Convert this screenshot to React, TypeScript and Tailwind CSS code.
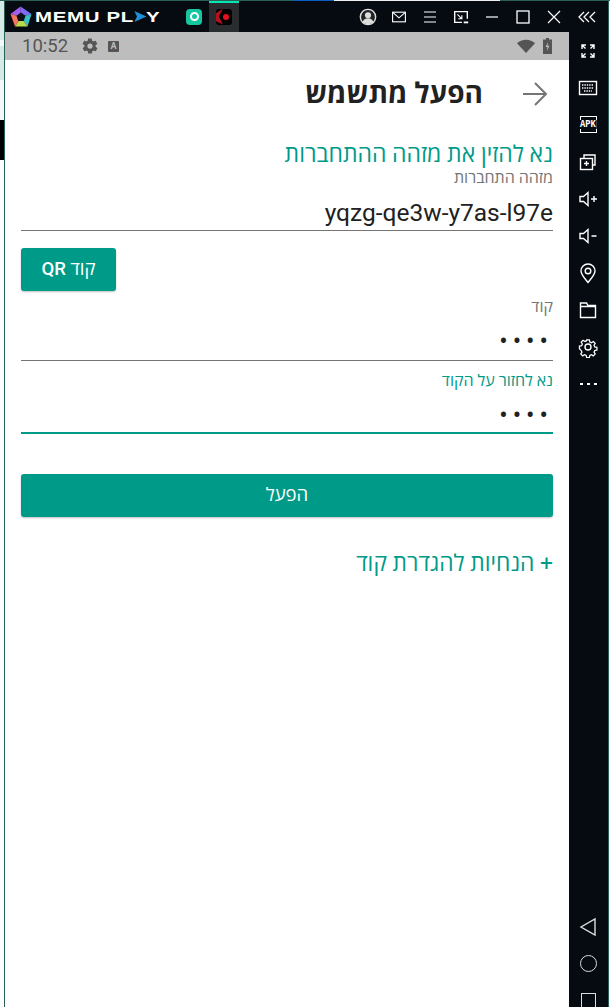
import React from 'react'

const stroke = { fill: 'none', stroke: 'white', strokeWidth: 1.4 }

const TopIcon = ({ children, size = 20 }: { children: React.ReactNode; size?: number }) => (
    <div className="w-[31px] flex items-center justify-center">
        <svg width={size} height={size} viewBox="0 0 20 20" {...stroke}>{children}</svg>
    </div>
)

const SideSlot = ({ children }: { children: React.ReactNode }) => (
    <div className="h-[37px] w-full shrink-0 flex items-center justify-center">{children}</div>
)

const SideIcon = ({ children }: { children: React.ReactNode }) => (
    <SideSlot>
        <svg width="22" height="22" viewBox="0 0 22 22" {...stroke}>{children}</svg>
    </SideSlot>
)

const Logo = () => (
    <svg width="22" height="22" viewBox="0 0 22 22" className="shrink-0">
        <polygon points="10.5,0.5 21.5,8 11,11" fill="#7b6cf6" />
        <polygon points="10.5,0.5 0.5,8 11,11" fill="#a35cf0" />
        <polygon points="21.5,8 17.5,20.5 11,11" fill="#35c3c9" />
        <polygon points="17.5,20.5 5,20.5 11,11" fill="#b9d94a" />
        <polygon points="5,20.5 0.5,8 11,11" fill="#f5745f" />
        <polygon points="11,6.5 15.5,9.8 13.8,15 8.2,15 6.5,9.8" fill="#0b0f16" />
    </svg>
)

const TitleBar = () => (
    <div className="h-[31px] flex items-center bg-[#060b12]">
        <div className="pl-[5px] flex items-center gap-[3px] w-[181px]">
            <Logo />
            <div className="flex items-center text-white font-black text-[15px] leading-none tracking-[0.5px] origin-left scale-x-[1.36]" style={{ fontFamily: '"Liberation Sans", sans-serif' }}>
                <span className="whitespace-pre">MEMU PL</span>
                <svg width="9" height="11" viewBox="0 0 9 11"><polygon points="0,0 9,5.5 0,11 2,5.5" fill="#1f8fd8" /></svg>
                <span>Y</span>
            </div>
        </div>
        <div className="w-[23px] flex items-center justify-start">
            <div className="size-[16px] rounded-[4px] bg-[#16c6a0] flex items-center justify-center">
                <div className="size-[9px] rounded-full border-[2px] border-white" />
            </div>
        </div>
        <div className="relative h-full w-[30px] bg-[#2a2d30] flex items-center justify-center">
            <div className="absolute inset-x-0 top-0 h-[2px] bg-[#00e6b4]" />
            <div className="size-[16px] rounded-[3px] bg-black flex items-center justify-center relative overflow-hidden">
                <div className="absolute left-0 top-0 w-[7px] h-full bg-[#b3121d] [clip-path:polygon(0_30%,100%_0,40%_50%,100%_100%,0_80%)]" />
                <div className="size-[6px] rounded-full bg-[#e8101e] ml-[4px]" />
            </div>
        </div>
        <div className="ml-auto flex items-center mr-[1px]">
            <TopIcon size={18}>
                <circle cx="10" cy="10" r="8.5" fill="#222" stroke="#ddd" strokeWidth="1.6" />
                <circle cx="10" cy="8" r="3.4" fill="#ddd" stroke="none" />
                <path d="M3.8 15.5c1.5-3 3.6-4 6.2-4s4.7 1 6.2 4c-3.5 3.2-8.9 3.2-12.4 0z" fill="#ddd" stroke="none" />
            </TopIcon>
            <TopIcon size={16}>
                <rect x="2" y="4" width="16" height="12" />
                <path d="M2.5 4.5 10 11l7.500-6.500" />
            </TopIcon>
            <TopIcon>
                <path d="M4 5h12M4 10h12M4 15h12" strokeWidth="1.1" />
            </TopIcon>
            <TopIcon size={18}>
                <path d="M11 16H3V4h14v8" strokeWidth="1.5" />
                <path d="M6 7l5 5M11 8v4H7" strokeWidth="1.2" />
                <path d="M13 16h5" strokeWidth="2" />
            </TopIcon>
            <TopIcon>
                <path d="M4 10h12" strokeWidth="1.2" />
            </TopIcon>
            <TopIcon>
                <rect x="4" y="4" width="12" height="12" strokeWidth="1.3" />
            </TopIcon>
            <TopIcon>
                <path d="M4 4l12 12M16 4L4 16" strokeWidth="1.2" />
            </TopIcon>
            <div className="w-[38px] flex items-center justify-end pr-[11px]">
                <svg width="18" height="14" viewBox="0 0 18 14" fill="none" stroke="white" strokeWidth="1.3">
                    <path d="M6 2 1 7l5 5M11 2 6 7l5 5M17 2l-5 5 5 5" />
                </svg>
            </div>
        </div>
    </div>
)

const StatusBar = () => (
    <div className="h-[28px] shrink-0 bg-[#bdbdbd] flex items-center pl-[17px] pr-[17px] text-[#555555]" style={{ fontFamily: 'Roboto, sans-serif' }}>
        <span className="text-[18.500px] leading-none">10:52</span>
        <svg width="18" height="18" viewBox="0 0 24 24" fill="#555555" className="ml-[13px]">
            <path d="M19.4 13c.1-.3.1-.7.1-1s0-.7-.1-1l2.1-1.6c.2-.2.2-.4.1-.6l-2-3.5c-.1-.2-.4-.3-.6-.2l-2.5 1c-.5-.4-1.1-.7-1.7-1l-.4-2.6c0-.3-.2-.5-.5-.5h-4c-.3 0-.5.2-.5.4l-.4 2.7c-.6.2-1.1.6-1.7 1l-2.5-1c-.2-.1-.5 0-.6.2l-2 3.5c-.1.2 0 .5.1.6L4.6 11c0 .3-.1.7-.1 1s0 .7.1 1l-2.1 1.6c-.2.2-.2.4-.1.6l2 3.5c.1.2.4.3.6.2l2.5-1c.5.4 1.1.7 1.7 1l.4 2.6c0 .3.2.5.5.5h4c.3 0 .5-.2.5-.4l.4-2.7c.6-.2 1.1-.6 1.7-1l2.5 1c.2.1.5 0 .6-.2l2-3.5c.1-.2.1-.5-.1-.6zM12 15.5a3.5 3.5 0 1 1 0-7 3.5 3.5 0 0 1 0 7z" />
        </svg>
        <div className="ml-[9px] size-[11px] bg-[#555555] rounded-[1px] text-[#bdbdbd] text-[9px] font-bold leading-[11px] text-center">A</div>
        <div className="ml-auto flex items-center gap-[8px]">
            <svg width="18" height="14" viewBox="0 0 18 14" fill="#555555"><path d="M0 4.2C2.4 2 5.5.8 9 .8s6.6 1.2 9 3.4L9 14z" /></svg>
            <svg width="9" height="16" viewBox="0 0 9 16" fill="#555555">
                <path d="M3 0h3v1.5h3V16H0V1.5h3z" />
                <path d="M5.2 4 2.5 9h2l-.7 4 2.7-5.2h-2z" fill="#bdbdbd" />
            </svg>
        </div>
    </div>
)

const Dots = () => (
    <div dir="rtl" className="text-[#212121] text-[25px] leading-none tracking-[5px] h-[20px] flex items-center" style={{ fontFamily: 'Roboto, sans-serif' }}>
        ••••
    </div>
)

const Sidebar = () => (
    <div className="w-[39px] shrink-0 bg-[#060b12] flex flex-col items-center pr-[1px]">
        <SideIcon>
            <path d="M5 9V5h4M5 5l3.5 3.5M17 9V5h-4M17 5l-3.5 3.5M5 13v4h4M5 17l3.5-3.5M17 13v4h-4M17 17l-3.5-3.5" />
        </SideIcon>
        <SideIcon>
            <rect x="2.5" y="4.5" width="17" height="13" />
            <path d="M5 8h12M5 11h12M7 14h8" strokeDasharray="1.4 1" />
        </SideIcon>
        <SideSlot>
            <div className="relative w-[17px] h-[17px] border border-white flex items-center justify-center">
                <span className="bg-[#060b12] text-white text-[11px] leading-[9px] font-bold scale-x-[0.8] px-[1px]" style={{ fontFamily: '"Liberation Mono", monospace' }}>APK</span>
            </div>
        </SideSlot>
        <SideIcon>
            <rect x="3.5" y="7.5" width="12" height="11" />
            <path d="M7 7V4h11v10h-2.5M9.5 10v5M7 12.5h5" />
        </SideIcon>
        <SideIcon>
            <path d="M3 8.500h3.500L11 4.500v13l-4.500-4H3zM14 11h6M17 8v6" />
        </SideIcon>
        <SideIcon>
            <path d="M3 8.500h3.500L11 4.500v13l-4.500-4H3zM14.500 11h5" />
        </SideIcon>
        <SideIcon>
            <path d="M11 20.500C7 15.500 4 12.500 4 9a7 7 0 0 1 14 0c0 3.500-3 6.500-7 11.500z" />
            <circle cx="11" cy="9" r="2.800" />
        </SideIcon>
        <SideIcon>
            <path d="M3.500 18.500V4h6l1.500 2.500h7.500v12zM3.500 7.500h15" />
        </SideIcon>
        <SideIcon>
            <circle cx="11" cy="11" r="3" />
            <path d="M9.500 3h3l.5 2.400 1.800.8 2.100-1.300 2.100 2.100-1.300 2.100.8 1.800 2.400.5v3l-2.400.5-.8 1.800 1.300 2.100-2.100 2.100-2.100-1.300-1.800.8-.5 2.400h-3l-.5-2.400-1.800-.8-2.100 1.300-2.100-2.100 1.300-2.100-.8-1.800L1.500 13v-3l2.400-.5.8-1.800-1.300-2.100 2.100-2.100 2.100 1.300 1.800-.8z" transform="translate(1.100 1.100) scale(.9)" />
        </SideIcon>
        <SideSlot>
            <div className="flex gap-[4px]">
                <div className="w-[3px] h-[2px] bg-white" />
                <div className="w-[3px] h-[2px] bg-white" />
                <div className="w-[3px] h-[2px] bg-white" />
            </div>
        </SideSlot>
        <div className="mt-auto -mb-[12px] w-full">
            <SideSlot>
                <svg width="18" height="20" viewBox="0 0 18 20" fill="none" stroke="#dddddd" strokeWidth="1.4"><path d="M16 2v16L2 10z" /></svg>
            </SideSlot>
            <SideSlot>
                <div className="size-[17px] rounded-full border-[1.5px] border-[#dddddd]" />
            </SideSlot>
            <SideSlot>
                <div className="size-[15px] border-[1.5px] border-[#dddddd]" />
            </SideSlot>
        </div>
    </div>
)

const App = () => {
    return (
        <div className="relative w-[610px] h-[1007px] overflow-hidden bg-white flex flex-col" style={{ fontFamily: 'Roboto, "Open Sans", "Liberation Sans", sans-serif' }}>
            {/* top edge of the window */}
            <div className="h-[1px] shrink-0 flex bg-[#2a5f58]">
                <div className="w-[293px]" />
                <div className="w-[41px] bg-[#0a5fc4]" />
                <div className="w-[166px] bg-[#eeeeee]" />
            </div>

            <div className="flex-1 flex min-h-0">
                {/* desktop behind the window */}
                <div className="w-[4px] shrink-0 flex flex-col bg-[#fafdfc]">
                    <div className="h-[39px] bg-[#d5e9e5]" />
                    <div className="h-[6px] bg-[#f2f9f7]" />
                    <div className="h-[34px] bg-[#d5e9e5]" />
                    <div className="h-[40px] bg-[#f2f9f7]" />
                    <div className="h-[40px] bg-black" />
                </div>
                <div className="w-[1px] shrink-0 bg-[#2a5f58]" />

                <div className="flex-1 flex flex-col min-w-0">
                    <TitleBar />
                    <div className="flex-1 flex min-h-0">
                        <div className="flex-1 flex flex-col min-w-0">
                            <StatusBar />

                            <div dir="rtl" className="px-[16px] flex-1 flex flex-col">
                                {/* header */}
                                <div className="h-[67px] shrink-0 flex items-center pr-[5px]">
                                    <svg width="26" height="26" viewBox="0 0 26 26" fill="none" stroke="#757575" strokeWidth="2" className="shrink-0">
                                        <path d="M1 13h23M13 2l11 11-11 11" />
                                    </svg>
                                    <h1 className="mr-[39px] text-[28px] font-bold text-[#212121] leading-none">הפעל מתשמש</h1>
                                </div>

                                <p className="text-[23px] leading-[28px] text-[#009a88] mt-[14px]">נא להזין את מזהה ההתחברות</p>
                                <p className="text-[16px] leading-[18px] text-[#757575]">מזהה התחברות</p>

                                <div dir="ltr" className="text-right text-[24.500px] leading-[28px] text-[#212121] mt-[12px] pb-[3px] border-b border-[#757575]">yqzg-qe3w-y7as-l97e</div>

                                <div className="mt-[17px] flex justify-end">
                                    <button className="w-[95px] h-[43px] rounded-[3px] bg-[#009a88] text-white text-[18.500px] font-medium shadow-[0_1px_2px_rgba(0,0,0,0.25)]">קוד QR</button>
                                </div>

                                <p className="mt-[7px] text-[16px] leading-[18px] text-[#757575]">קוד</p>
                                <div className="mt-[15px] pb-[9px] border-b border-[#757575]">
                                    <Dots />
                                </div>

                                <p className="mt-[11px] text-[16px] leading-[18px] text-[#009a88]">נא לחזור על הקוד</p>
                                <div className="mt-[15px] pb-[7px] border-b-2 border-[#009a88]">
                                    <Dots />
                                </div>

                                <button className="mt-[40px] h-[43px] shrink-0 rounded-[3px] bg-[#009a88] text-white text-[18.500px] shadow-[0_1px_2px_rgba(0,0,0,0.25)]">הפעל</button>

                                <p className="mt-[33px] text-[22.800px] leading-[28px] text-[#009a88]">+ הנחיות להגדרת קוד</p>
                            </div>
                        </div>
                        <Sidebar />
                    </div>
                </div>

                <div className="w-[1px] shrink-0 bg-[#2a5f58]" />
                <div className="w-[1px] shrink-0 bg-[#f4f8f7]" />
            </div>
        </div>
    )
}

export default App
